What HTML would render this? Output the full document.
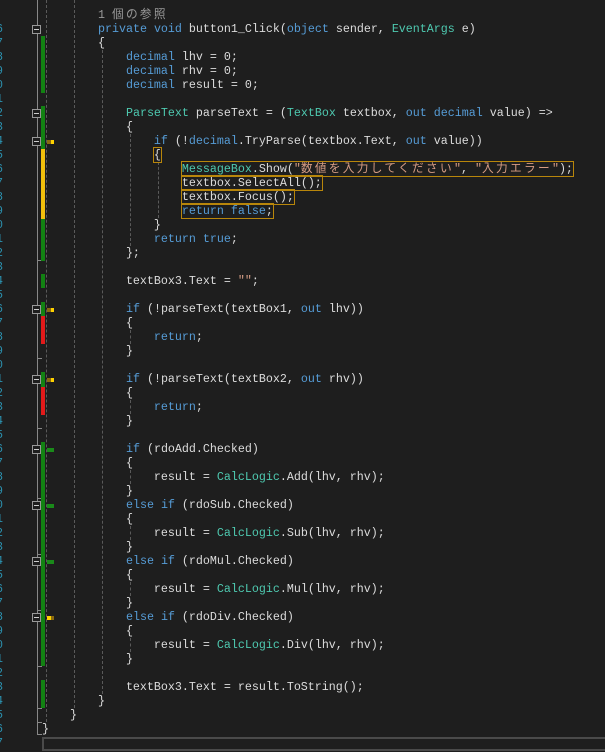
<!DOCTYPE html>
<html><head><meta charset="utf-8">
<style>
*{margin:0;padding:0}
body{width:605px;height:752px;background:#1e1e1e;overflow:hidden;position:relative;font-family:"Liberation Mono","Noto Sans CJK JP",monospace;font-size:11.67px;color:#dcdcdc}
.l{position:absolute;left:42px;height:14px;line-height:14px;white-space:pre}
.n{position:absolute;left:-22px;width:25px;text-align:right;height:14px;line-height:14px;color:#2b91af;font-size:11.67px}
.k{color:#569cd6}.t{color:#4ec9b0}.s{color:#d69d85}.g{color:#999}
.j{letter-spacing:2.33px}
.b{outline:1px solid #b8860b;outline-offset:0}
.bar{position:absolute;left:41px;width:4px}
.gr{background:#128212}.ye{background:#f2c00c}.re{background:#e21a1a}
.fb{position:absolute;left:32px;width:7px;height:7px;border:1px solid #999;background:#1e1e1e}
.fb:after{content:"";position:absolute;left:1px;top:3px;width:5px;height:1px;background:#ccc}
.gd{position:absolute;width:0;border-left:1px dashed #5a5a5a}
.tk{position:absolute;left:37px;width:5px;height:1px;background:#888}
.ic{position:absolute;left:47px;width:7px;height:4px}
</style></head><body>
<div style="position:absolute;left:37px;top:0;width:1px;height:735px;background:#888"></div>
<div class="tk" style="top:734px"></div>
<div class="tk" style="top:260px"></div><div class="tk" style="top:428px"></div><div class="tk" style="top:358px"></div><div class="tk" style="top:498px"></div><div class="tk" style="top:554px"></div><div class="tk" style="top:610px"></div><div class="tk" style="top:666px"></div><div class="tk" style="top:708px"></div><div class="tk" style="top:722px"></div>
<div class="gd" style="left:46px;top:0;height:722px"></div>
<div class="gd" style="left:74px;top:0;height:708px"></div>
<div class="gd" style="left:102px;top:50px;height:644px"></div>
<div class="gd" style="left:130px;top:134px;height:112px"></div>
<div class="gd" style="left:158px;top:162px;height:56px"></div>
<div class="gd" style="left:130px;top:330px;height:14px"></div>
<div class="gd" style="left:130px;top:400px;height:14px"></div>
<div class="gd" style="left:130px;top:470px;height:14px"></div>
<div class="gd" style="left:130px;top:526px;height:14px"></div>
<div class="gd" style="left:130px;top:582px;height:14px"></div>
<div class="gd" style="left:130px;top:638px;height:14px"></div>
<div class="bar gr" style="top:36px;height:57px"></div>
<div class="bar gr" style="top:106px;height:43px"></div>
<div class="bar ye" style="top:149px;height:70px"></div>
<div class="bar gr" style="top:219px;height:42px"></div>
<div class="bar gr" style="top:274px;height:14px"></div>
<div class="bar gr" style="top:302px;height:14px"></div>
<div class="bar re" style="top:316px;height:28px"></div>
<div class="bar gr" style="top:372px;height:15px"></div>
<div class="bar re" style="top:387px;height:28px"></div>
<div class="bar gr" style="top:442px;height:224px"></div>
<div class="bar gr" style="top:680px;height:28px"></div>
<div class="fb" style="top:25px"></div><div class="fb" style="top:109px"></div><div class="fb" style="top:137px"></div><div class="fb" style="top:305px"></div><div class="fb" style="top:375px"></div><div class="fb" style="top:445px"></div><div class="fb" style="top:501px"></div><div class="fb" style="top:557px"></div><div class="fb" style="top:613px"></div>
<div class="ic" style="top:140px;background:linear-gradient(90deg,#8a6a10 0 4px,#ffd200 4px)"></div>
<div class="ic" style="top:308px;background:linear-gradient(90deg,#8a6a10 0 4px,#ffd200 4px)"></div>
<div class="ic" style="top:378px;background:linear-gradient(90deg,#8a6a10 0 4px,#ffd200 4px)"></div>
<div class="ic" style="top:448px;background:#1a8a1a"></div>
<div class="ic" style="top:504px;background:#1a8a1a"></div>
<div class="ic" style="top:560px;background:#1a8a1a"></div>
<div class="ic" style="top:616px;background:linear-gradient(90deg,#ffd200 0 4px,#8a6a10 4px)"></div>
<div class="n" style="top:22px">6</div><div class="n" style="top:36px">7</div><div class="n" style="top:50px">8</div><div class="n" style="top:64px">9</div><div class="n" style="top:78px">0</div><div class="n" style="top:92px">1</div><div class="n" style="top:106px">2</div><div class="n" style="top:120px">3</div><div class="n" style="top:134px">4</div><div class="n" style="top:148px">5</div><div class="n" style="top:162px">6</div><div class="n" style="top:176px">7</div><div class="n" style="top:190px">8</div><div class="n" style="top:204px">9</div><div class="n" style="top:218px">0</div><div class="n" style="top:232px">1</div><div class="n" style="top:246px">2</div><div class="n" style="top:260px">3</div><div class="n" style="top:274px">4</div><div class="n" style="top:288px">5</div><div class="n" style="top:302px">6</div><div class="n" style="top:316px">7</div><div class="n" style="top:330px">8</div><div class="n" style="top:344px">9</div><div class="n" style="top:358px">0</div><div class="n" style="top:372px">1</div><div class="n" style="top:386px">2</div><div class="n" style="top:400px">3</div><div class="n" style="top:414px">4</div><div class="n" style="top:428px">5</div><div class="n" style="top:442px">6</div><div class="n" style="top:456px">7</div><div class="n" style="top:470px">8</div><div class="n" style="top:484px">9</div><div class="n" style="top:498px">0</div><div class="n" style="top:512px">1</div><div class="n" style="top:526px">2</div><div class="n" style="top:540px">3</div><div class="n" style="top:554px">4</div><div class="n" style="top:568px">5</div><div class="n" style="top:582px">6</div><div class="n" style="top:596px">7</div><div class="n" style="top:610px">8</div><div class="n" style="top:624px">9</div><div class="n" style="top:638px">0</div><div class="n" style="top:652px">1</div><div class="n" style="top:666px">2</div><div class="n" style="top:680px">3</div><div class="n" style="top:694px">4</div><div class="n" style="top:708px">5</div><div class="n" style="top:722px">6</div><div class="n" style="top:736px">7</div>
<div class="l g" style="top:8px">        1 <span class="j">個の参照</span></div>
<div class="l" style="top:22px">        <span class="k">private</span> <span class="k">void</span> button1_Click(<span class="k">object</span> sender, <span class="t">EventArgs</span> e)</div>
<div class="l" style="top:36px">        {</div>
<div class="l" style="top:50px">            <span class="k">decimal</span> lhv = 0;</div>
<div class="l" style="top:64px">            <span class="k">decimal</span> rhv = 0;</div>
<div class="l" style="top:78px">            <span class="k">decimal</span> result = 0;</div>
<div class="l" style="top:106px">            <span class="t">ParseText</span> parseText = (<span class="t">TextBox</span> textbox, <span class="k">out</span> <span class="k">decimal</span> value) =&gt;</div>
<div class="l" style="top:120px">            {</div>
<div class="l" style="top:134px">                <span class="k">if</span> (!<span class="k">decimal</span>.TryParse(textbox.Text, <span class="k">out</span> value))</div>
<div class="l" style="top:148px">                <span class="b">{</span></div>
<div class="l" style="top:162px">                    <span class="b"><span class="t">MessageBox</span>.Show(<span class="s">"<span class="j">数値を入力してください</span>"</span>, <span class="s">"<span class="j">入力エラー</span>"</span>);</span></div>
<div class="l" style="top:176px">                    <span class="b">textbox.SelectAll();</span></div>
<div class="l" style="top:190px">                    <span class="b">textbox.Focus();</span></div>
<div class="l" style="top:204px">                    <span class="b"><span class="k">return</span> <span class="k">false</span>;</span></div>
<div class="l" style="top:218px">                }</div>
<div class="l" style="top:232px">                <span class="k">return</span> <span class="k">true</span>;</div>
<div class="l" style="top:246px">            };</div>
<div class="l" style="top:274px">            textBox3.Text = <span class="s">""</span>;</div>
<div class="l" style="top:302px">            <span class="k">if</span> (!parseText(textBox1, <span class="k">out</span> lhv))</div>
<div class="l" style="top:316px">            {</div>
<div class="l" style="top:330px">                <span class="k">return</span>;</div>
<div class="l" style="top:344px">            }</div>
<div class="l" style="top:372px">            <span class="k">if</span> (!parseText(textBox2, <span class="k">out</span> rhv))</div>
<div class="l" style="top:386px">            {</div>
<div class="l" style="top:400px">                <span class="k">return</span>;</div>
<div class="l" style="top:414px">            }</div>
<div class="l" style="top:442px">            <span class="k">if</span> (rdoAdd.Checked)</div>
<div class="l" style="top:456px">            {</div>
<div class="l" style="top:470px">                result = <span class="t">CalcLogic</span>.Add(lhv, rhv);</div>
<div class="l" style="top:484px">            }</div>
<div class="l" style="top:498px">            <span class="k">else</span> <span class="k">if</span> (rdoSub.Checked)</div>
<div class="l" style="top:512px">            {</div>
<div class="l" style="top:526px">                result = <span class="t">CalcLogic</span>.Sub(lhv, rhv);</div>
<div class="l" style="top:540px">            }</div>
<div class="l" style="top:554px">            <span class="k">else</span> <span class="k">if</span> (rdoMul.Checked)</div>
<div class="l" style="top:568px">            {</div>
<div class="l" style="top:582px">                result = <span class="t">CalcLogic</span>.Mul(lhv, rhv);</div>
<div class="l" style="top:596px">            }</div>
<div class="l" style="top:610px">            <span class="k">else</span> <span class="k">if</span> (rdoDiv.Checked)</div>
<div class="l" style="top:624px">            {</div>
<div class="l" style="top:638px">                result = <span class="t">CalcLogic</span>.Div(lhv, rhv);</div>
<div class="l" style="top:652px">            }</div>
<div class="l" style="top:680px">            textBox3.Text = result.ToString();</div>
<div class="l" style="top:694px">        }</div>
<div class="l" style="top:708px">    }</div>
<div class="l" style="top:722px">}</div>
<div style="position:absolute;left:42px;top:737px;width:570px;height:10px;border:2px solid #4a4a4a;background:#1e1e1e"></div>
</body></html>
